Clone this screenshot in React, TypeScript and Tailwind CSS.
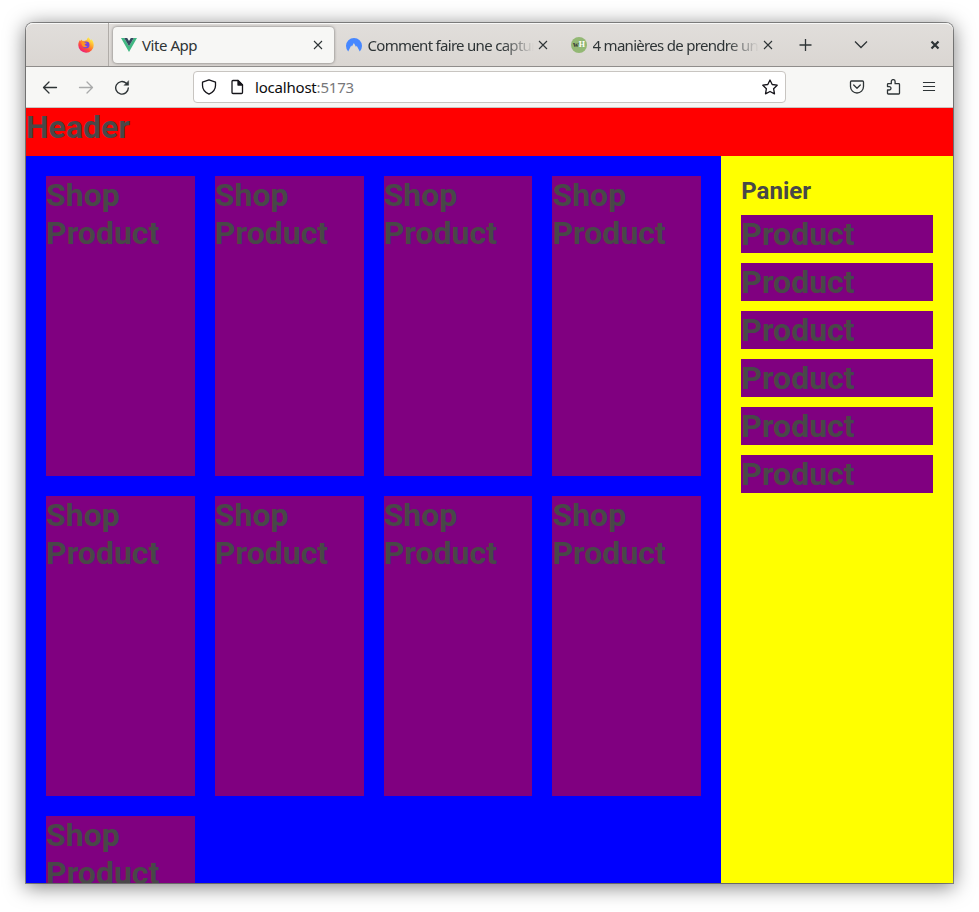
import React from "react";

const ink = "#2e3436";

function CloseIcon() {
  return (
    <svg className="block shrink-0" width="10" height="10" viewBox="0 0 10 10" fill="none" stroke={ink} strokeWidth="1.1">
      <path d="M1 1l8 8M9 1L1 9" />
    </svg>
  );
}

function FirefoxLogo() {
  return (
    <svg className="block" width="16" height="16" viewBox="0 0 16 16">
      <defs>
        <linearGradient id="fx" x1=".85" y1=".1" x2=".2" y2="1">
          <stop offset="0" stopColor="#fff44f" />
          <stop offset=".35" stopColor="#ffa32a" />
          <stop offset=".65" stopColor="#ff4a3d" />
          <stop offset="1" stopColor="#e5158b" />
        </linearGradient>
      </defs>
      <path fill="url(#fx)" d="M10.3.3C11.8 1.5 12.4 2.8 12.6 3.4 13.2 3 13.1 2.4 13 2c2 1.500 2.800 4 2.700 6.200A7.700 7.500 0 0 1 .3 8.300C.2 6 1 4.200 2 3c0 .5.1.8.2 1L3.700 2.600 4 3.800c.8-.1 1.500 0 2 .2L8.700 3C9 2 9.500 1 10.300.3z" />
      <circle cx="8.100" cy="7.900" r="3.400" fill="#7543e3" />
      <path fill="#ff9420" d="M3.200 5.400c1.500-1.200 3.200-.7 3.700.3h1.900c0 .8-1.900 1.100-2.100 1.800.3 1.600 1.700 1.600 2.800 1.200-1 2-4.300 1.900-5.400-.3z" />
    </svg>
  );
}

function VueLogo() {
  return (
    <svg className="block shrink-0" width="16" height="16" viewBox="0 0 16 16">
      <path fill="#41b883" d="M0 1h3.200L8 9.200 12.800 1H16L8 15z" />
      <path fill="#34495e" d="M3.200 1h3L8 4l1.800-3h3L8 9.200z" />
    </svg>
  );
}

function NordLogo() {
  return (
    <svg className="block shrink-0" width="16" height="16" viewBox="0 0 16 16">
      <path fill="#4687ff" d="M2.200 14.500A8 8 0 1 1 13.800 14.500L10.700 8.700 10 10 10.300 10.500 7.900 5.900 5.600 10.100 5.900 9.500 5.200 8.500z" />
    </svg>
  );
}

function WikiHowLogo() {
  return (
    <span className="flex size-4 shrink-0 items-center justify-center rounded-full bg-[#93b874] font-['Liberation_Serif',serif] text-[8px] font-bold leading-none tracking-normal">
      <span className="text-[#333]">w</span>
      <span className="text-white">H</span>
    </span>
  );
}

function Tab({ logo, title }: { logo: React.ReactNode; title: string }) {
  return (
    <div className="flex h-9 w-[225px] shrink-0 items-center pr-3 pl-[10px]">
      {logo}
      <span className="ml-[5.5px] w-[166px] overflow-hidden whitespace-nowrap tracking-[-0.7px] [mask-image:linear-gradient(to_right,#000_134px,transparent_166px)]">
        {title}
      </span>
      <span className="ml-[4.5px]"><CloseIcon /></span>
    </div>
  );
}

function TabStrip() {
  return (
    <div className="flex h-[44px] items-center rounded-t-[7px] border-b border-[#8f8d8b] bg-linear-to-b from-[#e1dedb] to-[#dad6d2] shadow-[inset_0_1px_0_#f8f8f7]">
      <div className="flex h-full w-[83px] shrink-0 items-center justify-end border-r border-[#b0aca8] pr-[14px]">
        <FirefoxLogo />
      </div>
      <div className="ml-1 flex h-9 w-[221px] shrink-0 items-center rounded bg-[#f7f7f5] pr-[11px] pl-2 shadow-[0_0_3px_rgba(0,0,0,0.5)]">
        <VueLogo />
        <span className="ml-[5px] flex-1 tracking-[-0.45px]">Vite App</span>
        <CloseIcon />
      </div>
      <div className="ml-[2px] flex">
        <Tab logo={<NordLogo />} title="Comment faire une capture" />
        <Tab logo={<WikiHowLogo />} title="4 manières de prendre une c" />
      </div>
      <svg className="ml-[13px] block shrink-0" width="14" height="14" viewBox="0 0 14 14" stroke={ink} strokeWidth="1.300" fill="none">
        <path d="M6.500 1v12M.5 7h12" />
      </svg>
      <svg className="ml-[41px] block shrink-0" width="14" height="14" viewBox="0 0 14 14" stroke={ink} strokeWidth="1.300" fill="none">
        <path d="M1 3.500l6 6 6-6" />
      </svg>
      <svg className="ml-[62px] block shrink-0" width="10" height="10" viewBox="0 0 10 10" stroke={ink} strokeWidth="2.200" fill="none">
        <path d="M1.500 1.500l7 7M8.500 1.500l-7 7" />
      </svg>
    </div>
  );
}

function Icon({ className, children }: { className: string; children: React.ReactNode }) {
  return (
    <svg className={`block shrink-0 ${className}`} width="16" height="16" viewBox="0 0 16 16" fill="none" strokeWidth="1.300" strokeLinecap="round" strokeLinejoin="round">
      {children}
    </svg>
  );
}

function Toolbar() {
  return (
    <div className="flex h-[41px] items-center border-b border-[#c9c6c2] bg-[#f7f7f5] text-[#2e3436]">
      <Icon className="ml-4 stroke-current">
        <path d="M1.500 8.500h13M7 3L1.500 8.500 7 14" />
      </Icon>
      <Icon className="ml-5 stroke-[#a9aaaa]">
        <path d="M1.500 8.500h13M9 3L14.500 8.500 9 14" />
      </Icon>
      <Icon className="ml-5 stroke-current">
        <path d="M14.300 9A6.300 6.300 0 1 1 12.300 4.200" strokeWidth="1.400" />
        <path d="M14.600 2v4.300h-4.300z" fill={ink} strokeWidth=".5" />
      </Icon>
      <div className="ml-[63px] flex h-8 w-[593px] shrink-0 items-center rounded border border-[#c8c5c1] bg-white text-[#0c0c0d]">
        <Icon className="ml-[7px] stroke-[#15141a]">
          <path d="M8 .8l6.500 2.400v3.300c0 3.600-2.300 6.800-6.500 8.700-4.200-1.900-6.500-5.100-6.500-8.700V3.200z" />
        </Icon>
        <Icon className="ml-3 stroke-[#15141a]">
          <path d="M4 1.500h5l4.500 4.500v7.500q0 1-1 1h-8.500q-1 0-1-1v-11q0-1 1-1z" />
          <path d="M9 1.500v4.500h4.500z" fill="#15141a" />
        </Icon>
        <span className="ml-[10px] flex-1 tracking-[-0.2px]">
          localhost<span className="text-[#77777a]">:5173</span>
        </span>
        <Icon className="mr-[7px] stroke-[#15141a]">
          <path d="M8 1l2.200 4.500 5 .7-3.600 3.500.9 5.100L8 12.500l-4.500 2.300.9-5.100L.8 6.200l5-.7z" />
        </Icon>
      </div>
      <Icon className="ml-[63px] stroke-current">
        <path d="M2.500 2h11q1 0 1 1v4.500a6.500 6.500 0 0 1-13 0V3q0-1 1-1zM4.700 6L8 9.200 11.300 6" />
      </Icon>
      <Icon className="ml-5 stroke-current">
        <path d="M3.300 15q-.8 0-.8-.8V11h1.800a1.700 1.700 0 0 0 0-3.400H2.500V5.500q0-.8.8-.8h3V2.500a1.900 1.900 0 0 1 3.800 0v2.200h3.600q.8 0 .8.800v8.700q0 .8-.8.800z" />
      </Icon>
      <Icon className="ml-5 stroke-current">
        <path d="M2.500 3.500h11M2.500 7.500h11M2.500 11.500h11" strokeLinecap="square" strokeWidth="1.100" />
      </Icon>
    </div>
  );
}

const title = "text-[32px] leading-[38px] font-bold";

export default function App() {
  return (
    <div className="h-[912px] w-[979px] overflow-hidden bg-white pt-[23px] pl-[26px]">
      <div className="flex h-[860px] w-[927px] flex-col rounded-t-[7px] font-['Noto_Sans',sans-serif] text-[15px] leading-5 text-[#2e3436] shadow-[0_0_0_1px_rgba(0,0,0,0.4),0_3px_20px_1px_rgba(0,0,0,0.5)]">
        <TabStrip />
        <Toolbar />
        <div className="flex min-h-0 flex-1 flex-col overflow-hidden font-[Roboto,sans-serif] text-[#484848]">
          <header className="h-12 shrink-0 bg-[#ff0000]">
            <h1 className={title}>Header</h1>
          </header>
          <div className="flex min-h-0 flex-1">
            <main className="grid w-3/4 auto-rows-[300px] grid-cols-4 content-start gap-5 overflow-hidden bg-[#0000ff] p-5">
              {Array.from({ length: 9 }, (_, i) => (
                <section key={i} className="bg-[#800080]">
                  <h1 className={title}>Shop Product</h1>
                </section>
              ))}
            </main>
            <aside className="flex w-1/4 flex-col gap-[10px] bg-[#ffff00] p-5">
              <h2 className="h-[29px] text-2xl leading-[31px] font-bold">Panier</h2>
              {Array.from({ length: 6 }, (_, i) => (
                <div key={i} className="bg-[#800080]">
                  <h1 className={title}>Product</h1>
                </div>
              ))}
            </aside>
          </div>
        </div>
      </div>
    </div>
  );
}
